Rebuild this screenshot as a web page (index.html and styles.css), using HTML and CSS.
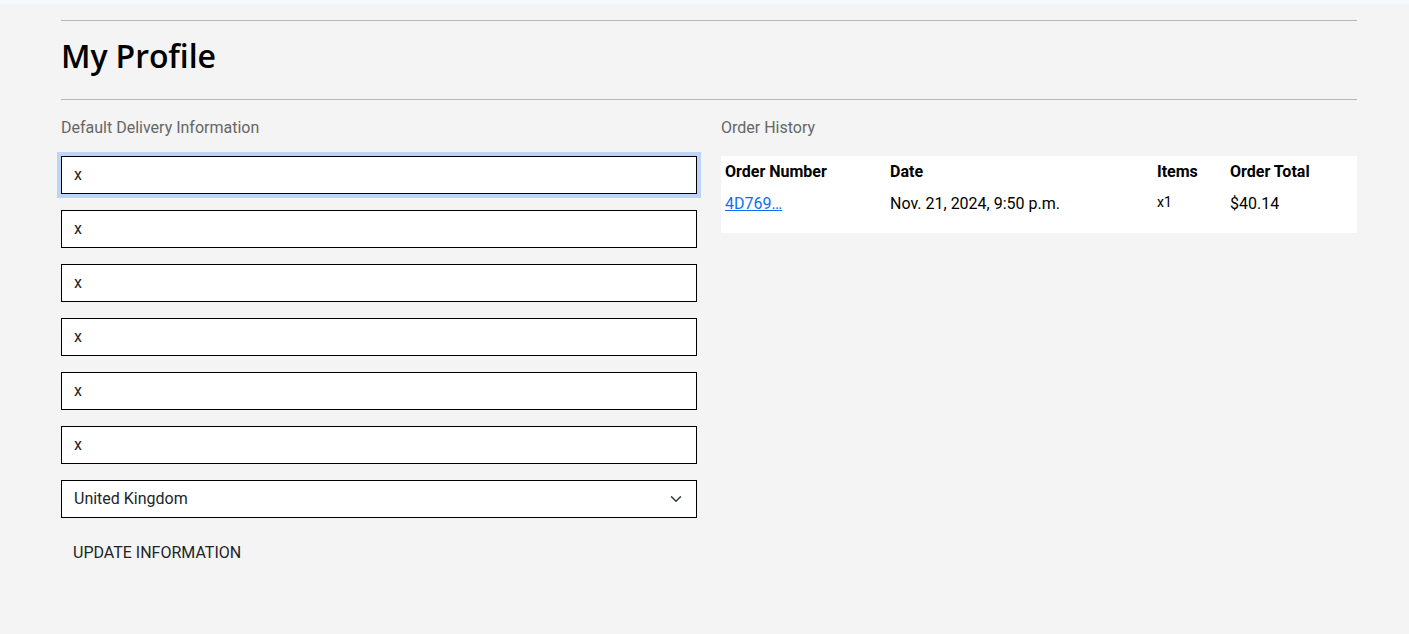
FILE: index.html
```html
<!DOCTYPE html>
<html lang="en">
<head>
<meta charset="utf-8">
<title>My Profile</title>
<link rel="stylesheet" href="styles.css">
</head>
<body>
<div class="topstrip"></div>
<main class="container">
  <hr class="rule">
  <h1 class="title">My Profile</h1>
  <hr class="rule rule-second">
  <div class="columns">
    <section class="col">
      <p class="section-label">Default Delivery Information</p>
      <form class="form">
        <input class="field text-field field-focus" type="text" value="x">
        <input class="field text-field" type="text" value="x">
        <input class="field text-field" type="text" value="x">
        <input class="field text-field" type="text" value="x">
        <input class="field text-field" type="text" value="x">
        <input class="field text-field" type="text" value="x">
        <div class="select-wrap">
          <select class="field select">
            <option>United Kingdom</option>
          </select>
          <svg class="chevron" width="16" height="16" viewBox="0 0 16 16"><path d="M2 5l6 6 6-6" fill="none" stroke="#343a40" stroke-width="2" stroke-linecap="round" stroke-linejoin="round"/></svg>
        </div>
        <button type="button" class="btn-update">UPDATE INFORMATION</button>
      </form>
    </section>
    <section class="col">
      <p class="section-label">Order History</p>
      <div class="table-box">
        <table class="orders">
          <thead>
            <tr>
              <th class="c-num">Order Number</th>
              <th class="c-date">Date</th>
              <th class="c-items">Items</th>
              <th class="c-total">Order Total</th>
            </tr>
          </thead>
          <tbody>
            <tr>
              <td><a href="#" class="order-link">4D769…</a></td>
              <td>Nov. 21, 2024, 9:50 p.m.</td>
              <td class="small">x1</td>
              <td>$40.14</td>
            </tr>
          </tbody>
        </table>
      </div>
    </section>
  </div>
</main>
</body>
</html>
```

FILE: styles.css
```css
* { box-sizing: border-box; }
html, body { margin: 0; padding: 0; }
body {
  background: #f4f4f4;
  font-family: Roboto, "Liberation Sans", Arial, sans-serif;
  font-size: 16px;
  line-height: 1.5;
  color: #212529;
}
.topstrip {
  height: 4px;
  background: #f7f8fa;
}
.container {
  width: 1296px;
  margin: 0 0 0 61px;
  padding-top: 16px;
}
.rule {
  margin: 0;
  border: 0;
  border-top: 1px solid #b5b5b5;
}
.title {
  margin: 0;
  padding: 8px 0 16px;
  height: 78px;
  font-family: "Open Sans", "Noto Sans", sans-serif;
  font-weight: 600;
  font-size: 32px;
  line-height: 54px;
  color: #000;
  letter-spacing: -0.1px;
}
.columns {
  display: flex;
  gap: 24px;
  padding-top: 16px;
}
.col { flex: 1 1 0; min-width: 0; }
.section-label {
  margin: 0 0 16px;
  color: #666;
  font-size: 16px;
  line-height: 24px;
}
.form {
  display: flex;
  flex-direction: column;
  gap: 16px;
  align-items: stretch;
}
.field {
  display: block;
  width: 100%;
  height: 38px;
  padding: 6px 12px;
  border: 1px solid #000;
  border-radius: 0;
  background: #fff;
  font-family: Roboto, "Liberation Sans", Arial, sans-serif;
  font-size: 16px;
  line-height: 24px;
  color: #212529;
  outline: none;
}
.text-field {
  padding-top: 5px;
  padding-bottom: 7px;
}
.field-focus {
  box-shadow: 0 0 0 4px #bcd4f6;
}
.select-wrap { position: relative; }
.select {
  appearance: none;
  -webkit-appearance: none;
  padding-right: 36px;
}
.chevron {
  position: absolute;
  right: 13px;
  top: 13px;
  width: 16px;
  height: 12px;
  pointer-events: none;
}
.btn-update {
  align-self: flex-start;
  margin-top: 1px;
  background: transparent;
  border: 0;
  padding: 6px 12px;
  font-family: Roboto, "Liberation Sans", Arial, sans-serif;
  font-size: 16px;
  line-height: 24px;
  color: #212529;
  cursor: pointer;
}
.table-box {
  background: #fff;
  padding-bottom: 13px;
}
.orders {
  width: 100%;
  border-collapse: collapse;
  background: #fff;
}
.orders th, .orders td {
  padding: 4px;
  text-align: left;
  vertical-align: top;
  line-height: 24px;
  font-size: 16px;
}
.orders th { font-weight: 700; color: #000; }
.orders td { color: #000; }
.c-num { width: 165px; }
.c-date { width: 267px; }
.c-items { width: 73px; }
.orders td.small { font-size: 14px; line-height: 21px; }
.order-link { color: #0d6efd; text-decoration: underline; }
```
